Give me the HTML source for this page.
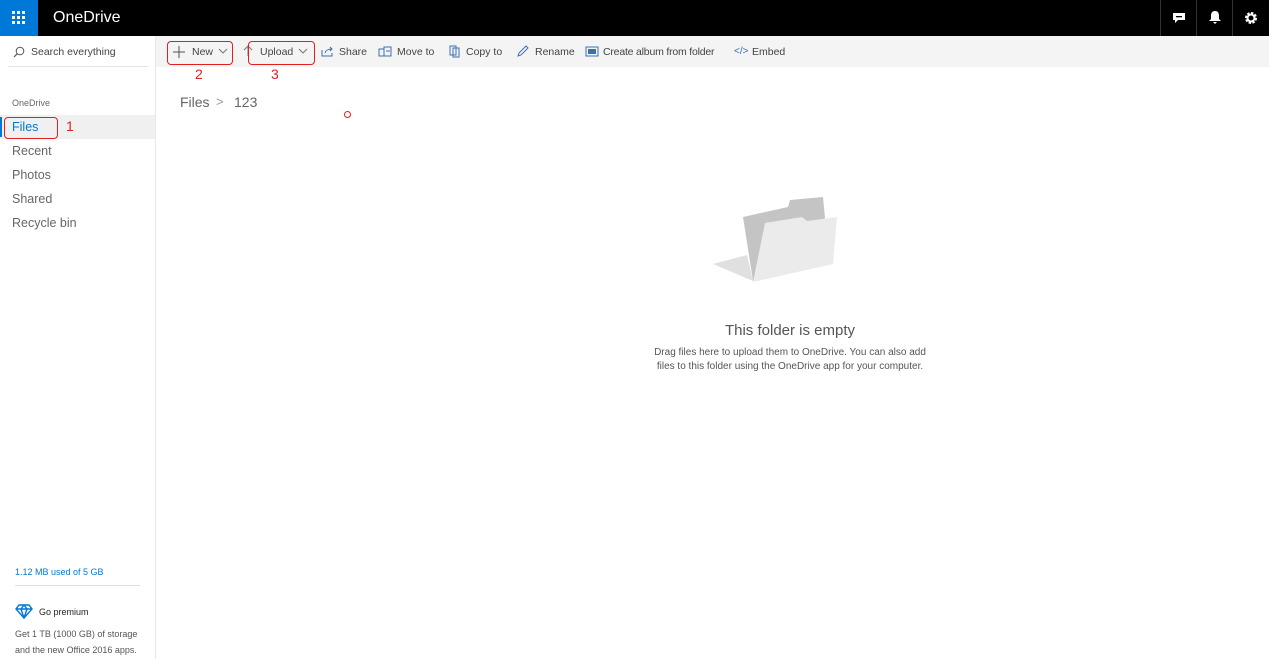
<!DOCTYPE html>
<html><head><meta charset="utf-8"><style>
*{margin:0;padding:0;box-sizing:border-box}
body{width:1269px;height:659px;overflow:hidden;background:#fff;font-family:"Liberation Sans",sans-serif;position:relative;color:#333}
.a{position:absolute;white-space:nowrap}
.top{left:0;top:0;width:1269px;height:36px;background:#000}
.waffle{left:0;top:0;width:38px;height:36px;background:#0078d7}
.sep{top:0;width:1px;height:36px;background:#333}
.cmd{left:156px;top:36px;width:1113px;height:31px;background:#f4f4f4}
.side{left:155px;top:36px;width:1px;height:623px;background:#e8e8e8}
.nav{left:12px;font-size:12.5px;color:#666}
.tb{top:46px;font-size:10.5px;color:#444}
.red{border:1.5px solid #e02020;border-radius:4px;position:absolute}
.num{color:#e02020;font-size:14px;position:absolute}
</style></head><body>
<div class="a top"></div>
<div class="a waffle"></div>
<svg class="a" style="left:12px;top:11px" width="14" height="14"><g fill="#fff">
<rect x="0" y="0" width="3" height="3"/><rect x="5" y="0" width="3" height="3"/><rect x="10" y="0" width="3" height="3"/>
<rect x="0" y="5" width="3" height="3"/><rect x="5" y="5" width="3" height="3"/><rect x="10" y="5" width="3" height="3"/>
<rect x="0" y="10" width="3" height="3"/><rect x="5" y="10" width="3" height="3"/><rect x="10" y="10" width="3" height="3"/></g></svg>
<div class="a" style="left:53px;top:9px;color:#fff;font-size:16px">OneDrive</div>
<div class="a sep" style="left:1160px"></div><div class="a sep" style="left:1196px"></div><div class="a sep" style="left:1232px"></div>
<svg class="a" style="left:1172px;top:11px" width="14" height="14"><path d="M1 2h12v7H6l-3 3V9H1z" fill="#fff"/><rect x="4" y="5" width="6" height="1.3" fill="#000"/></svg>
<svg class="a" style="left:1208px;top:10px" width="14" height="15"><path d="M7 1c3 0 4 2 4 5v3l2 2H1l2-2V6c0-3 1-5 4-5z M5 12h4l-2 2z" fill="#fff"/></svg>
<svg class="a" style="left:1244px;top:11px" width="14" height="14"><circle cx="7" cy="7" r="4.5" fill="none" stroke="#fff" stroke-width="3" stroke-dasharray="2.2 1.3"/><circle cx="7" cy="7" r="3.5" fill="none" stroke="#fff" stroke-width="2"/></svg>

<div class="a cmd"></div>
<div class="a side"></div>
<svg class="a" style="left:13px;top:46px" width="12" height="12"><circle cx="7" cy="5" r="3.8" fill="none" stroke="#555" stroke-width="1"/><path d="M4.3 7.7L1 11" stroke="#555" stroke-width="1.2"/></svg>
<div class="a" style="left:31px;top:46px;font-size:10.5px;color:#444">Search everything</div>
<div class="a" style="left:8px;top:66px;width:140px;height:1px;background:#e4e4e4"></div>
<div class="a" style="left:12px;top:98px;font-size:9px;color:#666">OneDrive</div>
<div class="a" style="left:0;top:115px;width:155px;height:24px;background:#f0f0f0"></div>
<div class="a" style="left:0;top:117px;width:2px;height:20px;background:#0078d7"></div>
<div class="a nav" style="top:120px;color:#0078d7">Files</div>
<div class="red" style="left:4px;top:117px;width:54px;height:22px"></div>
<div class="num" style="left:66px;top:118px">1</div>
<div class="a nav" style="top:144px">Recent</div>
<div class="a nav" style="top:168px">Photos</div>
<div class="a nav" style="top:192px">Shared</div>
<div class="a nav" style="top:216px">Recycle bin</div>

<div class="a" style="left:15px;top:567px;font-size:9px;color:#0078d7">1.12 MB used of 5 GB</div>
<div class="a" style="left:15px;top:585px;width:125px;height:1px;background:#e0e0e0"></div>
<svg class="a" style="left:15px;top:604px" width="18" height="15"><path d="M4 1h10l3 4-8 9-8-9z M1 5h16 M9 14L6 5l3-4 3 4z" fill="none" stroke="#0078d7" stroke-width="1.4"/></svg>
<div class="a" style="left:39px;top:607px;font-size:9px;color:#222">Go premium</div>
<div class="a" style="left:15px;top:629px;font-size:9px;color:#555">Get 1 TB (1000 GB) of storage</div>
<div class="a" style="left:15px;top:645px;font-size:9px;color:#555">and the new Office 2016 apps.</div>

<svg class="a" style="left:172px;top:45px" width="14" height="14"><path d="M7 1v12M1 7h12" stroke="#555" stroke-width="1"/></svg>
<div class="a tb" style="left:192px">New</div>
<svg class="a" style="left:218px;top:48px" width="10" height="6"><path d="M1 1l4 4 4-4" fill="none" stroke="#777"/></svg>
<div class="red" style="left:167px;top:41px;width:66px;height:24px"></div>
<div class="num" style="left:195px;top:66px">2</div>
<svg class="a" style="left:243px;top:45px" width="10" height="12"><path d="M5 11V2M1 5l4-4 4 4" fill="none" stroke="#777"/></svg>
<div class="a tb" style="left:260px">Upload</div>
<svg class="a" style="left:298px;top:48px" width="10" height="6"><path d="M1 1l4 4 4-4" fill="none" stroke="#777"/></svg>
<div class="red" style="left:248px;top:41px;width:67px;height:24px"></div>
<div class="num" style="left:271px;top:66px">3</div>
<svg class="a" style="left:321px;top:45px" width="13" height="12"><path d="M1 5v6h10V8 M4 8c1-3 3-4 7-4M9 2l2 2-2 2" fill="none" stroke="#3a6fb0"/></svg>
<div class="a tb" style="left:339px">Share</div>
<svg class="a" style="left:378px;top:46px" width="14" height="11"><path d="M1 3h5v7H1z M6 1h7v9H6z M8 5h4" fill="none" stroke="#3a6fb0"/></svg>
<div class="a tb" style="left:397px">Move to</div>
<svg class="a" style="left:449px;top:45px" width="12" height="13"><path d="M1 1h6v9H1z M4 3h6v9H4z" fill="#f4f4f4" stroke="#3a6fb0"/></svg>
<div class="a tb" style="left:466px">Copy to</div>
<svg class="a" style="left:516px;top:45px" width="13" height="13"><path d="M2 11l1-3 7-7 2 2-7 7z" fill="none" stroke="#3a6fb0"/></svg>
<div class="a tb" style="left:535px">Rename</div>
<svg class="a" style="left:585px;top:46px" width="14" height="11"><rect x="1" y="1" width="12" height="9" fill="none" stroke="#3a6fb0"/><rect x="3" y="3" width="8" height="5" fill="#3a6fb0"/></svg>
<div class="a tb" style="left:603px;letter-spacing:-0.2px">Create album from folder</div>
<div class="a" style="left:734px;top:46px;font-size:10px;color:#3a6fb0">&lt;/&gt;</div>
<div class="a tb" style="left:752px">Embed</div>

<div class="a" style="left:180px;top:94px;font-size:14px;color:#666">Files</div>
<div class="a" style="left:216px;top:94px;font-size:13px;color:#999">&gt;</div>
<div class="a" style="left:234px;top:94px;font-size:14px;color:#666">123</div>
<div class="a" style="left:344px;top:111px;width:7px;height:7px;border:1.5px solid #e02020;border-radius:50%"></div>

<svg class="a" style="left:700px;top:185px" width="150" height="105">
<path d="M13 79L47 70L53 96z" fill="#e0e0e0"/>
<path d="M43 32L88 22L90 15L123 12L125 33L53 96z" fill="#c4c4c4"/>
<path d="M65 38L102 32L107 36L137 32L133 79L53 97z" fill="#ebebeb"/>
</svg>
<div class="a" style="left:0;width:1580px;text-align:center;top:322px;font-size:15px;color:#555">This folder is empty</div>
<div class="a" style="left:0;width:1580px;text-align:center;top:346px;font-size:10px;color:#555;line-height:14px">Drag files here to upload them to OneDrive. You can also add<br>files to this folder using the OneDrive app for your computer.</div>
</body></html>
